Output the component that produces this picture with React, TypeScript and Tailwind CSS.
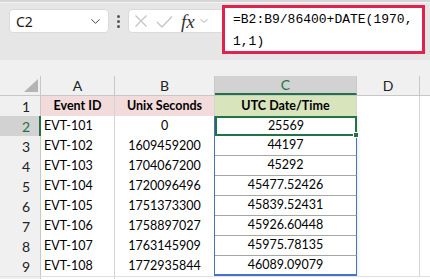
import { ChevronDown } from "lucide-react";

const rows = [
  ["EVT-101", "0", "25569"],
  ["EVT-102", "1609459200", "44197"],
  ["EVT-103", "1704067200", "45292"],
  ["EVT-104", "1720096496", "45477.52426"],
  ["EVT-105", "1751373300", "45839.52431"],
  ["EVT-106", "1758897027", "45926.60448"],
  ["EVT-107", "1763145909", "45975.78135"],
  ["EVT-108", "1772935844", "46089.09079"],
];

const cellFont = { fontFamily: "Lato, 'Noto Sans', sans-serif" };

function FormulaBar() {
  return (
    <div className="relative h-[60px] bg-[#e6e6e6]">
      <div className="h-[3px] border-b border-[#f4f4f4] bg-[#d6d6d6]" />
      <div className="flex items-start">
        <div className="ml-[9px] mt-[6px] flex h-[24px] w-[100px] items-center justify-between rounded-[4px] border border-[#dadada] bg-white pl-[6px] pr-[5px]">
          <span className="text-[14px] text-[#1a1a1a]" style={{ fontFamily: "'Noto Sans', sans-serif" }}>
            C2
          </span>
          <ChevronDown size={15} strokeWidth={1.6} className="text-[#444]" />
        </div>
        <div className="mx-[8px] mt-[12px] flex flex-col gap-[2px]">
          <span className="h-[3px] w-[3px] rounded-full bg-[#555]" />
          <span className="h-[3px] w-[3px] rounded-full bg-[#555]" />
          <span className="h-[3px] w-[3px] rounded-full bg-[#555]" />
        </div>
        <div className="mt-[6px] flex h-[24px] w-[96px] items-center gap-[8px] rounded-l-[4px] border border-[#dadada] bg-white pl-[5px]">
          <svg width="14" height="14" viewBox="0 0 14 14" className="text-[#c4c4c4]">
            <path d="M1.5 1.5 L12.5 12.5 M12.5 1.5 L1.5 12.5" stroke="currentColor" strokeWidth="1.3" fill="none" />
          </svg>
          <svg width="17" height="13" viewBox="0 0 17 13" className="text-[#c4c4c4]">
            <path d="M1 7 L6 12 L16 1.5" stroke="currentColor" strokeWidth="1.3" fill="none" />
          </svg>
          <span className="text-[19px] italic leading-none text-[#333]" style={{ fontFamily: "'Liberation Serif', serif" }}>
            fx
          </span>
          <ChevronDown size={12} strokeWidth={1.5} className="-ml-[5px] text-[#888]" />
        </div>
      </div>
      <div className="absolute left-[222px] top-[5px] h-[49px] w-[203px] border-[3px] border-[#e0234e] bg-white pl-[8px] pt-[1px]">
        <p className="text-[13px] leading-[22px] text-black" style={{ fontFamily: "'Liberation Mono', monospace" }}>
          =B2:B9/86400+DATE(1970,
          <br />
          1,1)
        </p>
      </div>
    </div>
  );
}

export default function App() {
  return (
    <div className="h-[279px] w-[430px] overflow-hidden bg-white" style={cellFont}>
      <FormulaBar />
      <div className="h-[16px] bg-[#f0f0f0]" />
      {/* column headers */}
      <div className="flex h-[20px] border-b border-[#c8c8c8] bg-[#f0f0f0] text-[14px] text-[#222]">
        <div className="relative w-[41px] border-r border-[#c8c8c8]">
          <svg width="14" height="13" viewBox="0 0 14 13" className="absolute right-[2px] bottom-[3px]">
            <path d="M14 0 L14 13 L0 13 Z" fill="#b4b4b4" />
          </svg>
        </div>
        <div className="flex w-[74px] items-center justify-center border-r border-[#c8c8c8]">A</div>
        <div className="flex w-[100px] items-center justify-center border-r border-[#c8c8c8]">B</div>
        <div className="flex w-[142px] items-center justify-center border-b-2 border-r border-b-[#217346] border-r-[#c8c8c8] bg-[#d2d2d2] text-[#217346]">
          C
        </div>
        <div className="flex w-[63px] items-center justify-center border-r border-[#c8c8c8]">D</div>
        <div className="flex-1" />
      </div>
      {/* row 1 */}
      <div className="flex h-[20px] text-[12.5px] text-black">
        <div className="flex w-[41px] items-center justify-end border-r border-[#c8c8c8] bg-[#f0f0f0] pr-[10px] text-[14px] text-[#222]">1</div>
        <div className="flex w-[74px] items-center justify-center border-r border-[#d4d4d4] bg-[#f2dcdb] font-bold">Event ID</div>
        <div className="flex w-[100px] items-center justify-center border-r border-[#d4d4d4] bg-[#f2dcdb] font-bold">Unix Seconds</div>
        <div className="flex w-[142px] items-center justify-center border-r border-[#d4d4d4] bg-[#d8e4bc] font-bold">UTC Date/Time</div>
        <div className="w-[63px] border-r border-[#d4d4d4]" />
        <div className="flex-1" />
      </div>
      {rows.map(([a, b, c], i) => {
        const selected = i === 0;
        return (
          <div key={a} className="flex h-[20px] text-[12.5px] text-black">
            <div
              className={
                selected
                  ? "flex w-[41px] items-center justify-end border-r-2 border-[#217346] bg-[#d2d2d2] pr-[9px] text-[14px] text-[#217346]"
                  : "flex w-[41px] items-center justify-end border-r border-[#c8c8c8] bg-[#f0f0f0] pr-[10px] text-[14px] text-[#222]"
              }
            >
              {i + 2}
            </div>
            <div className="flex w-[74px] items-center border-r border-[#d4d4d4] pl-[3px]">{a}</div>
            <div className="flex w-[100px] items-center justify-center border-r border-[#4472c4]">{b}</div>
            {selected ? (
              <div className="relative flex w-[142px] items-center justify-center border-2 border-[#217346]">
                {c}
                <span className="absolute -bottom-[4px] -right-[4px] h-[6px] w-[6px] border border-white bg-[#217346]" />
              </div>
            ) : (
              <div
                className={
                  i === rows.length - 1
                    ? "flex w-[142px] items-center justify-center border-r border-b-2 border-r-[#4472c4] border-b-[#4472c4]"
                    : "flex w-[142px] items-center justify-center border-r border-b border-r-[#4472c4] border-b-[#a6a6a6]"
                }
              >
                {c}
              </div>
            )}
            <div className="w-[63px] border-r border-[#d4d4d4] shadow-[inset_4px_0_3px_-2px_rgba(0,0,0,0.06)]" />
            <div className="flex-1" />
          </div>
        );
      })}
      <div className="flex h-[20px] border-t border-[#e0e0e0]">
        <div className="w-[41px] border-r border-[#c8c8c8] bg-[#f0f0f0]" />
        <div className="w-[74px] border-r border-[#d4d4d4]" />
      </div>
    </div>
  );
}
